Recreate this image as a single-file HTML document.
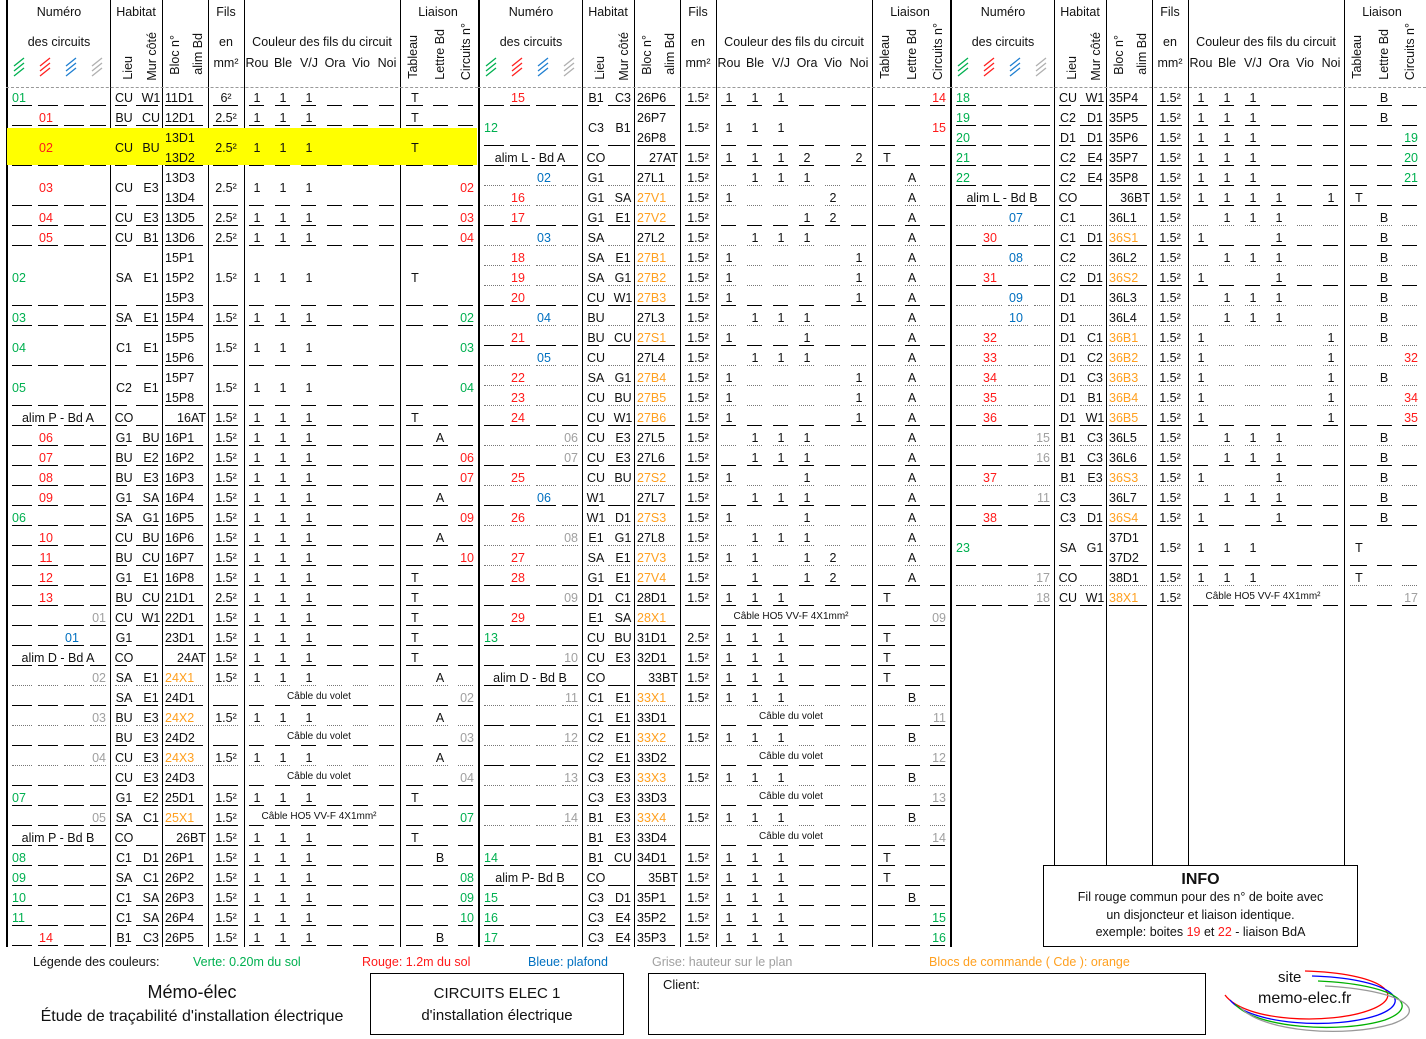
<!DOCTYPE html>
<html><head><meta charset="utf-8">
<style>
body{margin:0;width:1426px;height:1039px;background:#fff;position:relative;overflow:hidden;font-family:"Liberation Sans",Calibri,sans-serif;color:#111}
.t{position:absolute;font-size:12.5px;line-height:14px;white-space:nowrap}
.c{transform:translateX(-50%)}
.r{transform:translateX(-100%)}
.g{color:#00b050}.rd{color:#ff1a1a}.b{color:#0070c0}.x{color:#a0a0a0}.o{color:#ffa020}
.vl{position:absolute;width:1px;background:#000}
.ul{position:absolute;height:0;border-top:1px solid #000}
.ud{position:absolute;height:0;border-top:1px dotted #777}
.rot{position:absolute;writing-mode:vertical-rl;transform:rotate(180deg);font-size:12.5px;line-height:14px;white-space:nowrap}
.h{position:absolute;font-size:12.5px;white-space:nowrap}
.box{position:absolute;border:1.5px solid #000;box-sizing:border-box;background:#fff}
</style></head><body>
<div id="root"></div>

<div class="box" style="left:1043px;top:865px;width:315px;height:82px;text-align:center;font-size:12.5px;line-height:17.5px;padding-top:5px">
<div style="font-weight:bold;font-size:16px;line-height:18px">INFO</div>
Fil rouge commun pour des n° de boite avec<br>un disjoncteur et liaison identique.<br>exemple: boites <span class="rd">19</span> et <span class="rd">22</span> - liaison BdA</div>

<div class="h" style="left:33px;top:955px">Légende des couleurs:</div>
<div class="h g" style="left:193px;top:955px">Verte: 0.20m du sol</div>
<div class="h rd" style="left:362px;top:955px">Rouge: 1.2m du sol</div>
<div class="h b" style="left:528px;top:955px">Bleue: plafond</div>
<div class="h x" style="left:652px;top:955px">Grise: hauteur sur le plan</div>
<div class="h o" style="left:929px;top:955px">Blocs de commande ( Cde ): orange</div>

<div class="h" style="left:192px;top:982px;font-size:18px;transform:translateX(-50%)">Mémo-élec</div>
<div class="h" style="left:192px;top:1008px;font-size:16px;transform:translateX(-50%)">Étude de traçabilité d'installation électrique</div>
<div class="box" style="left:370px;top:973px;width:254px;height:62px;text-align:center;font-size:15px;line-height:22px;padding-top:9px">CIRCUITS ELEC 1<br>d'installation électrique</div>
<div class="box" style="left:648px;top:973px;width:558px;height:62px;font-size:13px;padding:3px 0 0 14px">Client:</div>
<svg style="position:absolute;left:1215px;top:965px" width="211" height="74" viewBox="1215 965 211 74" fill="none" stroke-width="1.3">
<path d="M1305 971 C1380 973 1410 995 1370 1010 C1330 1025 1245 1022 1225 995" stroke="#ff0000"/>
<path d="M1312 976 C1385 978 1418 1000 1378 1015 C1335 1030 1250 1025 1230 1000" stroke="#0000ff"/>
<path d="M1318 981 C1392 984 1425 1005 1385 1020 C1340 1034 1255 1028 1235 1004" stroke="#00b000"/>
<path d="M1325 986 C1400 990 1432 1010 1392 1024 C1345 1038 1262 1032 1240 1007" stroke="#999"/>
</svg>
<div class="h" style="left:1278px;top:969px;font-size:15px">site</div>
<div class="h" style="left:1258px;top:990px;font-size:16px">memo-elec.fr</div>

<script>
var P=[
[[1,'s','g01','CU','W1','11D1','6²','111...','T','',''],
[1,'s','r01','BU','CU','12D1','2.5²','111...','T','',''],
[2,'sy','r02','CU','BU','13D1|13D2','2.5²','111...','T','',''],
[2,'s','r03','CU','E3','13D3|13D4','2.5²','111...','','','r02'],
[1,'s','r04','CU','E3','13D5','2.5²','111...','','','r03'],
[1,'s','r05','CU','B1','13D6','2.5²','111...','','','r04'],
[3,'s','g02','SA','E1','15P1|15P2|15P3','1.5²','111...','T','',''],
[1,'s','g03','SA','E1','15P4','1.5²','111...','','','g02'],
[2,'s','g04','C1','E1','15P5|15P6','1.5²','111...','','','g03'],
[2,'s','g05','C2','E1','15P7|15P8','1.5²','111...','','','g04'],
[1,'s','aalim P - Bd A','CO','','R16AT','1.5²','111...','T','',''],
[1,'s','r06','G1','BU','16P1','1.5²','111...','','A',''],
[1,'s','r07','BU','E2','16P2','1.5²','111...','','','r06'],
[1,'s','r08','BU','E3','16P3','1.5²','111...','','','r07'],
[1,'s','r09','G1','SA','16P4','1.5²','111...','','A',''],
[1,'s','g06','SA','G1','16P5','1.5²','111...','','','r09'],
[1,'s','r10','CU','BU','16P6','1.5²','111...','','A',''],
[1,'s','r11','BU','CU','16P7','1.5²','111...','','','r10'],
[1,'s','r12','G1','E1','16P8','1.5²','111...','T','',''],
[1,'s','r13','BU','CU','21D1','2.5²','111...','T','',''],
[1,'s','x01','CU','W1','22D1','1.5²','111...','T','',''],
[1,'s','b01','G1','','23D1','1.5²','111...','T','',''],
[1,'s','aalim D - Bd A','CO','','R24AT','1.5²','111...','T','',''],
[1,'d','x02','SA','E1','o24X1','1.5²','111...','','A',''],
[1,'s','','SA','E1','24D1','','V','','','x02'],
[1,'d','x03','BU','E3','o24X2','1.5²','111...','','A',''],
[1,'s','','BU','E3','24D2','','V','','','x03'],
[1,'d','x04','CU','E3','o24X3','1.5²','111...','','A',''],
[1,'s','','CU','E3','24D3','','V','','','x04'],
[1,'s','g07','G1','E2','25D1','1.5²','111...','T','',''],
[1,'s','x05','SA','C1','o25X1','1.5²','H','','','g07'],
[1,'s','aalim P - Bd B','CO','','R26BT','1.5²','111...','T','',''],
[1,'s','g08','C1','D1','26P1','1.5²','111...','','B',''],
[1,'s','g09','SA','C1','26P2','1.5²','111...','','','g08'],
[1,'s','g10','C1','SA','26P3','1.5²','111...','','','g09'],
[1,'s','g11','C1','SA','26P4','1.5²','111...','','','g10'],
[1,'s','r14','B1','C3','26P5','1.5²','111...','','B','']],
[[1,'s','r15','B1','C3','26P6','1.5²','111...','','','r14'],
[2,'s','g12','C3','B1','26P7|26P8','1.5²','111...','','','r15'],
[1,'s','aalim L - Bd A','CO','','R27AT','1.5²','1112.2','T','',''],
[1,'d','b02','G1','','27L1','1.5²','.111..','','A',''],
[1,'d','r16','G1','SA','o27V1','1.5²','1...2.','','A',''],
[1,'s','r17','G1','E1','o27V2','1.5²','...12.','','A',''],
[1,'d','b03','SA','','27L2','1.5²','.111..','','A',''],
[1,'d','r18','SA','E1','o27B1','1.5²','1....1','','A',''],
[1,'d','r19','SA','G1','o27B2','1.5²','1....1','','A',''],
[1,'s','r20','CU','W1','o27B3','1.5²','1....1','','A',''],
[1,'d','b04','BU','','27L3','1.5²','.111..','','A',''],
[1,'s','r21','BU','CU','o27S1','1.5²','1..1..','','A',''],
[1,'d','b05','CU','','27L4','1.5²','.111..','','A',''],
[1,'d','r22','SA','G1','o27B4','1.5²','1....1','','A',''],
[1,'d','r23','CU','BU','o27B5','1.5²','1....1','','A',''],
[1,'s','r24','CU','W1','o27B6','1.5²','1....1','','A',''],
[1,'d','x06','CU','E3','27L5','1.5²','.111..','','A',''],
[1,'s','x07','CU','E3','27L6','1.5²','.111..','','A',''],
[1,'d','r25','CU','BU','o27S2','1.5²','1..1..','','A',''],
[1,'s','b06','W1','','27L7','1.5²','.111..','','A',''],
[1,'d','r26','W1','D1','o27S3','1.5²','1..1..','','A',''],
[1,'d','x08','E1','G1','27L8','1.5²','.111..','','A',''],
[1,'d','r27','SA','E1','o27V3','1.5²','11.12.','','A',''],
[1,'s','r28','G1','E1','o27V4','1.5²','.1.12.','','A',''],
[1,'s','x09','D1','C1','28D1','1.5²','111...','T','',''],
[1,'s','r29','E1','SA','o28X1','','H','','','x09'],
[1,'s','g13','CU','BU','31D1','2.5²','111...','T','',''],
[1,'s','x10','CU','E3','32D1','1.5²','111...','T','',''],
[1,'s','aalim D - Bd B','CO','','R33BT','1.5²','111...','T','',''],
[1,'d','x11','C1','E1','o33X1','1.5²','111...','','B',''],
[1,'s','','C1','E1','33D1','','V','','','x11'],
[1,'d','x12','C2','E1','o33X2','1.5²','111...','','B',''],
[1,'s','','C2','E1','33D2','','V','','','x12'],
[1,'d','x13','C3','E3','o33X3','1.5²','111...','','B',''],
[1,'s','','C3','E3','33D3','','V','','','x13'],
[1,'d','x14','B1','E3','o33X4','1.5²','111...','','B',''],
[1,'s','','B1','E3','33D4','','V','','','x14'],
[1,'s','g14','B1','CU','34D1','1.5²','111...','T','',''],
[1,'s','aalim P- Bd B','CO','','R35BT','1.5²','111...','T','',''],
[1,'s','g15','C3','D1','35P1','1.5²','111...','','B',''],
[1,'s','g16','C3','E4','35P2','1.5²','111...','','','g15'],
[1,'s','g17','C3','E4','35P3','1.5²','111...','','','g16']],
[[1,'s','g18','CU','W1','35P4','1.5²','111...','','B',''],
[1,'s','g19','C2','D1','35P5','1.5²','111...','','B',''],
[1,'s','g20','D1','D1','35P6','1.5²','111...','','','g19'],
[1,'s','g21','C2','E4','35P7','1.5²','111...','','','g20'],
[1,'s','g22','C2','E4','35P8','1.5²','111...','','','g21'],
[1,'s','aalim L - Bd B','CO','','R36BT','1.5²','1111.1','T','',''],
[1,'d','b07','C1','','36L1','1.5²','.111..','','B',''],
[1,'s','r30','C1','D1','o36S1','1.5²','1..1..','','B',''],
[1,'d','b08','C2','','36L2','1.5²','.111..','','B',''],
[1,'s','r31','C2','D1','o36S2','1.5²','1..1..','','B',''],
[1,'d','b09','D1','','36L3','1.5²','.111..','','B',''],
[1,'d','b10','D1','','36L4','1.5²','.111..','','B',''],
[1,'d','r32','D1','C1','o36B1','1.5²','1....1','','B',''],
[1,'d','r33','D1','C2','o36B2','1.5²','1....1','','','r32'],
[1,'d','r34','D1','C3','o36B3','1.5²','1....1','','B',''],
[1,'d','r35','D1','B1','o36B4','1.5²','1....1','','','r34'],
[1,'s','r36','D1','W1','o36B5','1.5²','1....1','','','r35'],
[1,'d','x15','B1','C3','36L5','1.5²','.111..','','B',''],
[1,'s','x16','B1','C3','36L6','1.5²','.111..','','B',''],
[1,'d','r37','B1','E3','o36S3','1.5²','1..1..','','B',''],
[1,'s','x11','C3','','36L7','1.5²','.111..','','B',''],
[1,'s','r38','C3','D1','o36S4','1.5²','1..1..','','B',''],
[2,'s','g23','SA','G1','37D1|37D2','1.5²','111...','T','',''],
[1,'d','x17','CO','','38D1','1.5²','111...','T','',''],
[1,'s','x18','CU','W1','o38X1','1.5²','H','','','x17']]
];
var OFF=[6,478,950],H='',cls={g:'g',r:'rd',b:'b',x:'x'};
function T(x,y,s,c,a){H+='<div class="t '+(a||'')+' '+(c||'')+'" style="left:'+x+'px;top:'+(y-6)+'px">'+s+'</div>';}
var SEG=[[6,20],[32,20],[58,20],[84,16],[109,12],[130,22],[159,38],[207,25],[243,15],[269,15],[295,15],[321,15],[347,15],[373,15],[400,17],[427,15],[452,15]];
OFF.forEach(function(o,pi){
  var bot=pi==2?865:947;
  H+='<div class="vl" style="left:'+o+'px;top:0;height:947px;width:2px"></div>';
  [104,156,202,238,394].forEach(function(v){H+='<div class="vl" style="left:'+(o+v)+'px;top:0;height:'+(bot)+'px"></div>';});
  H+='<div class="h c" style="left:'+(o+53)+'px;top:5px">Numéro</div>';
  H+='<div class="h c" style="left:'+(o+53)+'px;top:35px">des circuits</div>';
  H+='<div class="h c" style="left:'+(o+130)+'px;top:5px">Habitat</div>';
  H+='<div class="h c" style="left:'+(o+220)+'px;top:5px">Fils</div>';
  H+='<div class="h c" style="left:'+(o+220)+'px;top:35px">en</div>';
  H+='<div class="h c" style="left:'+(o+220)+'px;top:56px">mm²</div>';
  H+='<div class="h c" style="left:'+(o+316)+'px;top:35px">Couleur des fils du circuit</div>';
  H+='<div class="h c" style="left:'+(o+432)+'px;top:5px">Liaison</div>';
  ['Rou','Ble','V/J','Ora','Vio','Noi'].forEach(function(s,k){H+='<div class="h c" style="left:'+(o+251+26*k)+'px;top:56px">'+s+'</div>';});
  [[122,80,'Lieu'],[146,81,'Mur côté'],[169,75,'Bloc n°'],[192,75,'alim Bd'],[407,79,'Tableau'],[434,80,'Lettre Bd'],[460,80,'Circuits n°']].forEach(function(r){
    H+='<div class="rot" style="left:'+(o+r[0]-7)+'px;bottom:'+(1039-r[1])+'px">'+r[2]+'</div>';});
  var hc=['#00b050','#ff2020','#1f7fd0','#b0b0b0'];
  H+='<svg style="position:absolute;left:'+o+'px;top:54px" width="104" height="26">';
  hc.forEach(function(c,k){var x=8+26*k;for(var j=0;j<3;j++){H+='<line x1="'+x+'" y1="'+(12+j*5)+'" x2="'+(x+10)+'" y2="'+(4+j*5)+'" stroke="'+c+'" stroke-width="1.3"/>';}});
  H+='</svg>';
  H+='<div class="ud" style="left:'+o+'px;top:87px;width:'+(pi==2?476:472)+'px;border-top:1px dashed #999"></div>';
  var yy=87;
  P[pi].forEach(function(R){
    var h=R[0],top=yy,cy=top+10*h,ub=top+20*h-2;
    if(R[1].indexOf('y')>=0)H+='<div style="position:absolute;left:'+(o+1)+'px;top:'+(top+1)+'px;width:470px;height:'+(20*h-3)+'px;background:#ffff00"></div>';
    var ucl=R[1][0]=='d'?'ud':'ul';
    SEG.forEach(function(s){H+='<div class="'+ucl+'" style="left:'+(o+s[0])+'px;top:'+ub+'px;width:'+s[1]+'px"></div>';});
    var n=R[2];
    if(n){var c=n[0],v=n.slice(1);
      if(c=='a')T(o+52,cy,v,'','c');
      else if(c=='g')T(o+6,cy,v,'g');
      else if(c=='r')T(o+40,cy,v,'rd','c');
      else if(c=='b')T(o+66,cy,v,'b','c');
      else T(o+100,cy,v,'x','r');}
    if(R[3])T(o+118,cy,R[3],'','c');
    if(R[4])T(o+145,cy,R[4],'','c');
    var bl=R[5];
    if(bl[0]=='R')T(o+200,cy,bl.slice(1),'','r');
    else if(bl[0]=='o')T(o+159,cy,bl.slice(1),'o');
    else{var parts=bl.split('|');parts.forEach(function(p,k){T(o+159,top+10+20*k,p);});}
    if(R[6])T(o+220,cy,R[6],'','c');
    var col=R[7];
    if(col=='V')H+='<div class="t c" style="font-size:10px;left:'+(o+313)+'px;top:'+(cy-7)+'px">Câble du volet</div>';
    else if(col=='H')H+='<div class="t c" style="font-size:10px;left:'+(o+313)+'px;top:'+(cy-7)+'px">Câble HO5 VV-F 4X1mm²</div>';
    else for(var k=0;k<6;k++){if(col[k]!='.')T(o+251+26*k,cy,col[k],'','c');}
    if(R[8])T(o+409,cy,R[8],'','c');
    if(R[9])T(o+434,cy,R[9],'','c');
    if(R[10])T(o+468,cy,R[10].slice(1),cls[R[10][0]],'r');
    yy+=20*h;
  });
});
document.getElementById('root').innerHTML=H;
</script>
</body></html>
